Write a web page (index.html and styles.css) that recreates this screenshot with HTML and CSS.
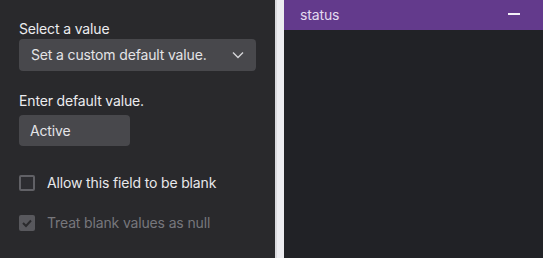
FILE: index.html
```html
<!DOCTYPE html>
<html>
<head>
    <meta charset="UTF-8">
    <title>Default value</title>
    <link rel="stylesheet" href="styles.css">
</head>
<body>
    <div class="layout">
        <div class="settings">
            <div class="field">
                <label class="field-label">Select a value</label>
                <div class="select">
                    <span>Set a custom default value.</span>
                    <svg class="chevron" width="12" height="8" viewBox="0 0 12 8">
                        <path d="M1 1.5 L6 6.5 L11 1.5" fill="none" stroke="currentColor" stroke-width="1.4"/>
                    </svg>
                </div>
            </div>
            <div class="field value-field">
                <label class="field-label">Enter default value.</label>
                <div class="text-input">Active</div>
            </div>
            <div class="check-row">
                <span class="checkbox"></span>
                <span>Allow this field to be blank</span>
            </div>
            <div class="check-row disabled">
                <span class="checkbox checked">
                    <svg width="12" height="10" viewBox="0 0 12 10">
                        <path d="M2 5 L5 8 L10 2.5" fill="none" stroke="currentColor" stroke-width="2"/>
                    </svg>
                </span>
                <span>Treat blank values as null</span>
            </div>
        </div>
        <div class="divider"></div>
        <div class="preview">
            <div class="preview-header">
                <span>status</span>
                <span class="minus"></span>
            </div>
        </div>
    </div>
</body>
</html>
```

FILE: styles.css
```css
/* Base styles */
body {
    margin: 0;
    font-family: Inter, "Noto Sans", sans-serif;
    font-size: 14px;
    line-height: 1.4;
    letter-spacing: -0.15px;
    color: #e6e6e9;
    background: #212226;
}

.layout {
    display: flex;
    height: 258px;
}

/* Settings panel */
.settings {
    width: 275px;
    background: #29292c;
    padding: 20px 19px 0;
    box-sizing: border-box;
    display: flex;
    flex-direction: column;
}

.field {
    display: flex;
    flex-direction: column;
    gap: 1px;
    margin-bottom: 21px;
}

.value-field {
    gap: 5px;
}

.field-label {
    font-size: 14px;
    line-height: 18px;
    color: #ececef;
}

.select {
    display: flex;
    align-items: center;
    justify-content: space-between;
    height: 32px;
    padding: 0 12px;
    background: #48484c;
    border-radius: 4px;
    color: #e4e4e7;
}

.chevron {
    color: #d4d4d8;
}

.text-input {
    width: 111px;
    height: 31px;
    box-sizing: border-box;
    padding: 0 11px;
    line-height: 31px;
    background: #48484c;
    border-radius: 4px;
    color: #e4e4e7;
}

/* Checkboxes */
.check-row {
    display: flex;
    align-items: center;
    gap: 12px;
    height: 16px;
    margin-top: 8px;
    margin-bottom: 16px;
    color: #e8e8eb;
}

.check-row.disabled {
    color: #77777c;
}

.checkbox {
    width: 16px;
    height: 16px;
    box-sizing: border-box;
    border: 2px solid #616166;
    border-radius: 2px;
    background: #2d2d31;
    display: flex;
    align-items: center;
    justify-content: center;
}

.checkbox.checked {
    border: none;
    background: #58585d;
    color: #2a2a2d;
}

/* Divider */
.divider {
    width: 9px;
    background: #ececf0;
    border-left: 2px solid #dadade;
    box-sizing: border-box;
}

/* Preview */
.preview {
    flex: 1;
    background: #212226;
}

.preview-header {
    height: 30px;
    background: #633a8c;
    display: flex;
    align-items: center;
    justify-content: space-between;
    padding: 0 23px 0 16px;
    color: #e3daf0;
}

.minus {
    width: 12px;
    height: 2px;
    background: #f4f0f8;
    margin-top: -2px;
}
```
